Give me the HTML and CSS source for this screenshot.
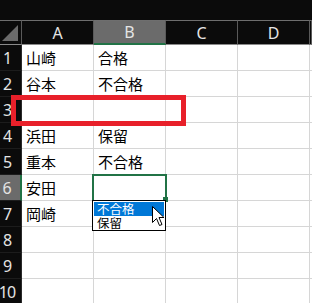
FILE: index.html
```html
<!DOCTYPE html>
<html lang="ja">
<head>
    <meta charset="UTF-8">
    <meta name="viewport" content="width=device-width, initial-scale=1.0">
    <title>Sheet</title>
    <link rel="stylesheet" href="styles.css">
</head>
<body>

<div class="topbar"></div>

<div class="sheet">
    <div class="corner">
        <svg width="22" height="25" viewBox="0 0 22 25"><polygon points="2,21 18,21 18,5" fill="#6b6b6b"/></svg>
    </div>
    <div class="col-head">A</div>
    <div class="col-head active">B</div>
    <div class="col-head">C</div>
    <div class="col-head">D</div>
    <div class="col-head"></div>

    <div class="row-head">1</div>
    <div class="cell">山崎</div><div class="cell">合格</div><div class="cell"></div><div class="cell"></div><div class="cell"></div>

    <div class="row-head">2</div>
    <div class="cell">谷本</div><div class="cell">不合格</div><div class="cell"></div><div class="cell"></div><div class="cell"></div>

    <div class="row-head">3</div>
    <div class="cell"></div><div class="cell"></div><div class="cell"></div><div class="cell"></div><div class="cell"></div>

    <div class="row-head">4</div>
    <div class="cell">浜田</div><div class="cell">保留</div><div class="cell"></div><div class="cell"></div><div class="cell"></div>

    <div class="row-head">5</div>
    <div class="cell">重本</div><div class="cell">不合格</div><div class="cell"></div><div class="cell"></div><div class="cell"></div>

    <div class="row-head active">6</div>
    <div class="cell">安田</div><div class="cell"></div><div class="cell"></div><div class="cell"></div><div class="cell"></div>

    <div class="row-head">7</div>
    <div class="cell">岡崎</div><div class="cell"></div><div class="cell"></div><div class="cell"></div><div class="cell"></div>

    <div class="row-head">8</div>
    <div class="cell"></div><div class="cell"></div><div class="cell"></div><div class="cell"></div><div class="cell"></div>

    <div class="row-head">9</div>
    <div class="cell"></div><div class="cell"></div><div class="cell"></div><div class="cell"></div><div class="cell"></div>

    <div class="row-head">10</div>
    <div class="cell"></div><div class="cell"></div><div class="cell"></div><div class="cell"></div><div class="cell"></div>

    <!-- red highlight round row 3 -->
    <div class="mark"></div>

    <!-- active cell B6 -->
    <div class="selection"></div>
    <div class="fill-handle"></div>

    <div class="dropdown">
        <div class="option selected">不合格</div>
        <div class="option">保留</div>
    </div>

    <svg class="cursor" width="13" height="21" viewBox="0 0 13 21">
        <polygon points="0.5,0.5 0.5,16.5 4.5,12.5 7.5,19.5 10,18.5 7,11.5 12,11.5" fill="#fff" stroke="#000" stroke-width="1" stroke-linejoin="miter"/>
    </svg>
</div>

</body>
</html>
```

FILE: styles.css
```css
body {
    margin: 0;
    padding: 0;
    background-color: #0b0b0b;
    overflow: hidden;
    width: 312px;
    height: 303px;
}

.topbar {
    height: 20px;
    background-color: #0b0b0b;
}

.sheet {
    position: relative;
    display: grid;
    grid-template-columns: 22px repeat(4, 72px) 2px;
    grid-template-rows: 25px repeat(10, 26px);
    width: 312px;
    overflow: hidden;
    background-color: #fff;
}

.corner {
    background-color: #0b0b0b;
    border-top: 1px solid #6e6e6e;
    border-right: 1px solid #5a5a5a;
    border-bottom: 1px solid #8a8a8a;
    box-sizing: border-box;
    overflow: hidden;
}

.corner svg {
    display: block;
    margin-top: -1px;
}

.col-head {
    background-color: #0b0b0b;
    color: #e4e4e4;
    font-family: "Noto Sans", sans-serif;
    font-size: 16px;
    display: flex;
    align-items: center;
    justify-content: center;
    border-top: 1px solid #6e6e6e;
    border-right: 1px solid #5a5a5a;
    border-bottom: 1px solid #8a8a8a;
    box-sizing: border-box;
}

.col-head.active {
    background-color: #6b6b6b;
    border-bottom: 2px solid #217346;
}

.row-head {
    background-color: #0b0b0b;
    color: #e4e4e4;
    font-family: "Noto Sans", sans-serif;
    font-size: 16px;
    display: flex;
    align-items: center;
    justify-content: center;
    padding-right: 7px;
    border-right: 1px solid #2a2a2a;
    border-bottom: 1px solid #1c1c1c;
    box-sizing: border-box;
    letter-spacing: -1px;
}

.row-head.active {
    background-color: #6b6b6b;
    border-right: 2px solid #217346;
}

.cell {
    background-color: #fff;
    color: #000;
    font-family: "Noto Sans CJK JP", sans-serif;
    font-size: 15px;
    line-height: 1;
    display: flex;
    align-items: center;
    padding-left: 4px;
    border-right: 1px solid #d6d6d6;
    border-bottom: 1px solid #d6d6d6;
    box-sizing: border-box;
}

.mark {
    position: absolute;
    left: 11px;
    top: 75px;
    width: 175px;
    height: 31px;
    border: 5px solid #e8202a;
    box-sizing: border-box;
}

.selection {
    position: absolute;
    left: 92px;
    top: 154px;
    width: 75px;
    height: 28px;
    border: 2px solid #217346;
    box-sizing: border-box;
}

.fill-handle {
    position: absolute;
    left: 163px;
    top: 177px;
    width: 5px;
    height: 5px;
    background-color: #217346;
}

.dropdown {
    position: absolute;
    left: 92px;
    top: 180px;
    width: 74px;
    height: 31px;
    background-color: #fff;
    border: 1px solid #000;
    padding: 1px 1px 0 1px;
    box-sizing: border-box;
    font-family: "Noto Sans CJK JP", sans-serif;
    font-size: 12.5px;
}

.option {
    height: 14px;
    line-height: 14px;
    padding-left: 3px;
    color: #000;
}

.option.selected {
    background-color: #0078d7;
    color: #fff;
}

.cursor {
    position: absolute;
    left: 152px;
    top: 186px;
}
```
